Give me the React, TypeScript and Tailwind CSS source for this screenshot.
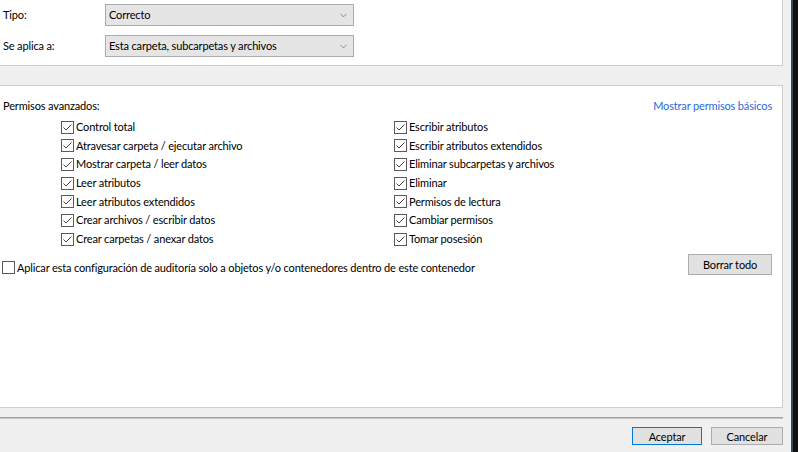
import { ChevronDown } from "lucide-react";

const leftPerms = [
  "Control total",
  "Atravesar carpeta / ejecutar archivo",
  "Mostrar carpeta / leer datos",
  "Leer atributos",
  "Leer atributos extendidos",
  "Crear archivos / escribir datos",
  "Crear carpetas / anexar datos",
];

const rightPerms = [
  "Escribir atributos",
  "Escribir atributos extendidos",
  "Eliminar subcarpetas y archivos",
  "Eliminar",
  "Permisos de lectura",
  "Cambiar permisos",
  "Tomar posesión",
];

function CheckBox({ checked }: { checked: boolean }) {
  return (
    <svg width="13" height="13" viewBox="0 0 13 13" className="shrink-0">
      <rect x="0.5" y="0.5" width="12" height="12" fill="#fff" stroke="#5a5a5a" />
      {checked ? (
        <path d="M2.5 6.5 L5 9 L10.5 3.5" fill="none" stroke="#444" strokeWidth="1" />
      ) : null}
    </svg>
  );
}

function PermRow({ label }: { label: string }) {
  return (
    <div className="flex h-[18.67px] items-center gap-[2px]">
      <CheckBox checked />
      <span>{label}</span>
    </div>
  );
}

function Select({ value }: { value: string }) {
  return (
    <div className="flex h-[22px] w-[249px] items-center justify-between border border-[#acacac] bg-[#e5e5e5] pl-[3px] pr-[4px]">
      <span>{value}</span>
      <ChevronDown size={11} strokeWidth={1.5} color="#666" />
    </div>
  );
}

export default function App() {
  return (
    <div
      className="flex h-[452px] w-[798px] overflow-hidden bg-[#f0f0f0] text-[11px] tracking-[-0.15px] text-black"
      style={{ fontFamily: 'Lato, "Noto Sans", sans-serif' }}
    >
      <div className="flex w-[791px] flex-col pr-[8px]">
        <section className="flex h-[66px] flex-col gap-[9px] border-r border-b border-[#cfcfcf] bg-white pt-[4px]">
          <div className="flex items-center">
            <span className="w-[105px] pl-[3px]">Tipo:</span>
            <Select value="Correcto" />
          </div>
          <div className="flex items-center">
            <span className="w-[105px] pl-[3px]">Se aplica a:</span>
            <Select value="Esta carpeta, subcarpetas y archivos" />
          </div>
        </section>

        <section className="mt-[19px] flex h-[323px] flex-col border-y border-r border-[#cfcfcf] bg-white pt-[11px]">
          <div className="flex h-[19px] items-center justify-between pl-[3px] pr-[10px]">
            <span>Permisos avanzados:</span>
            <span className="text-[#2a6ad8]">Mostrar permisos básicos</span>
          </div>
          <div className="mt-[2px] flex">
            <div className="w-[394px] pl-[61px]">
              {leftPerms.map((p) => (
                <PermRow key={p} label={p} />
              ))}
            </div>
            <div>
              {rightPerms.map((p) => (
                <PermRow key={p} label={p} />
              ))}
            </div>
          </div>
          <div className="mt-[5px] flex items-center justify-between pl-[2px] pr-[10px]">
            <div className="mt-[6px] flex items-center gap-[2px]">
              <CheckBox checked={false} />
              <span>Aplicar esta configuración de auditoría solo a objetos y/o contenedores dentro de este contenedor</span>
            </div>
            <button className="h-[21px] w-[84px] border border-[#adadad] bg-[#e1e1e1]">Borrar todo</button>
          </div>
        </section>

        <div className="mt-[9px] h-[2px] border-t border-[#a0a0a0] bg-[#c8c8c8]" />
        <div className="mt-[8px] flex justify-end gap-[9px]">
          <button className="h-[18px] w-[70px] border border-[#0078d7] bg-[#e1e1e1] leading-none">Aceptar</button>
          <button className="h-[18px] w-[72px] border border-[#adadad] bg-[#e1e1e1] leading-none">Cancelar</button>
        </div>
      </div>
      <div className="w-[2px] bg-[#3a4a66]" />
      <div className="flex-1 bg-[#111]" />
    </div>
  );
}
